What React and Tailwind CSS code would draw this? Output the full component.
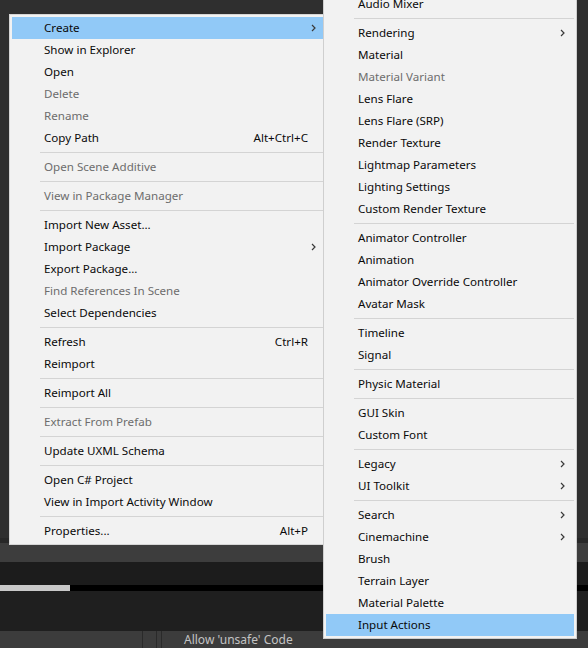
import React from 'react'

const mainItems = [
  { t: 'Create', arrow: true, hl: true },
  { t: 'Show in Explorer' },
  { t: 'Open' },
  { t: 'Delete', dis: true },
  { t: 'Rename', dis: true },
  { t: 'Copy Path', sc: 'Alt+Ctrl+C' },
  'sep',
  { t: 'Open Scene Additive', dis: true },
  'sep',
  { t: 'View in Package Manager', dis: true },
  'sep',
  { t: 'Import New Asset...' },
  { t: 'Import Package', arrow: true },
  { t: 'Export Package...' },
  { t: 'Find References In Scene', dis: true },
  { t: 'Select Dependencies' },
  'sep',
  { t: 'Refresh', sc: 'Ctrl+R' },
  { t: 'Reimport' },
  'sep',
  { t: 'Reimport All' },
  'sep',
  { t: 'Extract From Prefab', dis: true },
  'sep',
  { t: 'Update UXML Schema' },
  'sep',
  { t: 'Open C# Project' },
  { t: 'View in Import Activity Window' },
  'sep',
  { t: 'Properties...', sc: 'Alt+P' },
]

const subItems = [
  { t: 'Audio Mixer' },
  'sep',
  { t: 'Rendering', arrow: true },
  { t: 'Material' },
  { t: 'Material Variant', dis: true },
  { t: 'Lens Flare' },
  { t: 'Lens Flare (SRP)' },
  { t: 'Render Texture' },
  { t: 'Lightmap Parameters' },
  { t: 'Lighting Settings' },
  { t: 'Custom Render Texture' },
  'sep',
  { t: 'Animator Controller' },
  { t: 'Animation' },
  { t: 'Animator Override Controller' },
  { t: 'Avatar Mask' },
  'sep',
  { t: 'Timeline' },
  { t: 'Signal' },
  'sep',
  { t: 'Physic Material' },
  'sep',
  { t: 'GUI Skin' },
  { t: 'Custom Font' },
  'sep',
  { t: 'Legacy', arrow: true },
  { t: 'UI Toolkit', arrow: true },
  'sep',
  { t: 'Search', arrow: true },
  { t: 'Cinemachine', arrow: true },
  { t: 'Brush' },
  { t: 'Terrain Layer' },
  { t: 'Material Palette' },
  { t: 'Input Actions', hl: true },
]

function Chevron() {
  return (
    <svg width="5" height="8" viewBox="0 0 5 8" className="shrink-0">
      <polyline points="1,1 4,4 1,7" fill="none" stroke="#3a3a3a" strokeWidth="1.2" />
    </svg>
  )
}

function MenuList({ items, pr }) {
  return (
    <div className="flex flex-col">
      {items.map((it, i) =>
        it === 'sep' ? (
          <div key={i} className="h-[7px] flex items-center pl-[28px]">
            <div className="h-px w-full bg-[#d4d4d4]" />
          </div>
        ) : (
          <div
            key={i}
            className={`h-[22px] flex items-center pl-[32px] ${pr} ${it.hl ? 'bg-[#91c9f7]' : ''} ${it.dis ? 'text-[#6d6d6d]' : 'text-[#0a0a0a]'}`}
          >
            <span className="flex-1 whitespace-nowrap">{it.t}</span>
            {it.sc && <span className="pr-[8px] whitespace-nowrap">{it.sc}</span>}
            {it.arrow && <Chevron />}
          </div>
        )
      )}
    </div>
  )
}

export default function App() {
  return (
    <div
      className="relative w-[588px] h-[648px] overflow-hidden bg-[#2f2f2f] text-[11.6px] flex flex-col"
      style={{ fontFamily: '"Noto Sans", "Noto Sans CJK KR", sans-serif' }}
    >
      {/* editor background */}
      <div className="h-[544px]" />
      <div className="h-[5px] bg-[#282828]" />
      <div className="h-[19px] bg-[#3d3d3d]" />
      <div className="h-[23px] bg-[#1c1c1c]" />
      <div className="h-[7px] flex">
        <div className="w-[70px] bg-[#c8c8c8]" />
        <div className="flex-1 bg-black" />
      </div>
      <div className="h-[40px] bg-[#1f1f1f]" />
      <div className="flex-1 bg-[#3c3c3c] flex">
        <div className="w-[142px]" />
        <div className="w-px bg-[#2a2a2a]" />
        <div className="w-[13px]" />
        <div className="w-px bg-[#2a2a2a]" />
        <div className="w-[4px]" />
        <div className="w-px bg-[#2a2a2a]" />
        <div className="pl-[22px] pt-[1px] text-[#c4c4c4] text-[12px] leading-[16px] whitespace-nowrap">Allow 'unsafe' Code</div>
      </div>

      {/* context menu */}
      <div className="absolute left-[9px] top-[14px] w-[317px] bg-[#f2f2f2] border border-[#d6d6d6] p-[2px]">
        <MenuList items={mainItems} pr="pr-[7px]" />
      </div>

      {/* create submenu */}
      <div className="absolute left-[323px] top-[-10px] w-[254px] bg-[#f2f2f2] border border-[#cfcfcf] p-[2px]">
        <MenuList items={subItems} pr="pr-[9px]" />
      </div>
    </div>
  )
}
